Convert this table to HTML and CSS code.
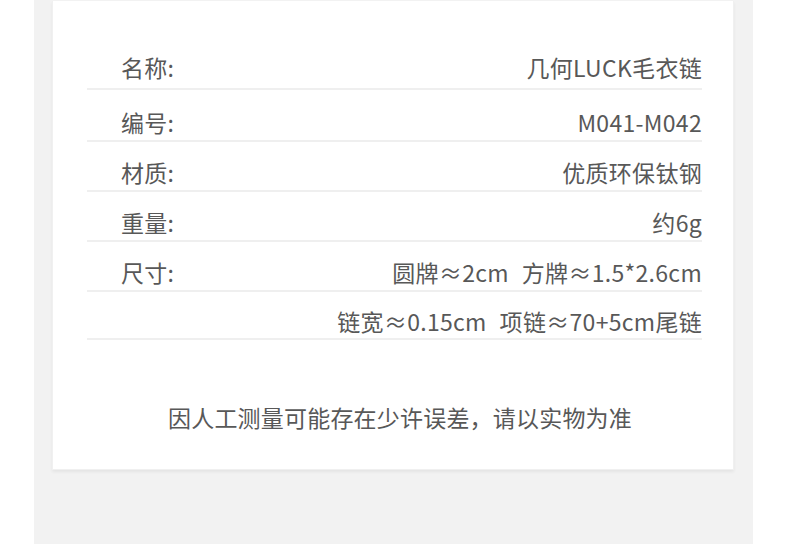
FILE: index.html
```html
<!DOCTYPE html>
<html lang="zh-CN">
<head>
    <meta charset="UTF-8">
    <meta name="viewport" content="width=device-width, initial-scale=1.0">
    <title>几何LUCK毛衣链 - 商品参数</title>
    <link rel="stylesheet" href="styles.css">
</head>
<body>
    <div class="page">
        <div class="card">
            <ul class="spec-list">
                <li class="spec-row">
                    <span class="spec-label">名称:</span>
                    <span class="spec-value">几何LUCK毛衣链</span>
                </li>
                <li class="spec-row">
                    <span class="spec-label">编号:</span>
                    <span class="spec-value">M041-M042</span>
                </li>
                <li class="spec-row">
                    <span class="spec-label">材质:</span>
                    <span class="spec-value">优质环保钛钢</span>
                </li>
                <li class="spec-row">
                    <span class="spec-label">重量:</span>
                    <span class="spec-value">约6g</span>
                </li>
                <li class="spec-row">
                    <span class="spec-label">尺寸:</span>
                    <span class="spec-value">圆牌≈2cm  方牌≈1.5*2.6cm</span>
                </li>
                <li class="spec-row">
                    <span class="spec-label"></span>
                    <span class="spec-value">链宽≈0.15cm  项链≈70+5cm尾链</span>
                </li>
            </ul>
            <p class="note">因人工测量可能存在少许误差，请以实物为准</p>
        </div>
    </div>
</body>
</html>
```

FILE: styles.css
```css
/* Global Styles */
* {
    margin: 0;
    padding: 0;
    box-sizing: border-box;
}

body {
    background: #ffffff;
    font-family: "Noto Sans CJK SC", "Noto Sans", sans-serif;
    color: #585858;
}

/* Gray column */
.page {
    margin-left: 34px;
    width: 719px;
    min-height: 544px;
    background: #f2f2f2;
    padding-top: 1px;
}

/* White card */
.card {
    margin: 0 19px 0 18px;
    background: #ffffff;
    border: 1px solid #f0f0f0;
    border-top: none;
    box-shadow: 0 2px 3px rgba(0, 0, 0, 0.06);
    padding: 39px 31px 37px 34px;
}

/* Spec rows */
.spec-list {
    list-style: none;
}

.spec-row {
    display: flex;
    justify-content: space-between;
    align-items: center;
    height: 50px;
    padding: 17px 0 5px 34px;
    border-bottom: 2px solid #efefef;
    font-size: 23px;
    line-height: 26px;
    letter-spacing: 0.3px;
}

.spec-row:first-child {
    padding-top: 14px;
    padding-bottom: 8px;
}

.spec-row:nth-child(2) {
    height: 52px;
    padding-top: 19px;
}

.spec-row:last-child {
    height: 48px;
    padding-top: 16px;
    padding-bottom: 4px;
}

.spec-value {
    white-space: pre;
    word-spacing: 1px;
}

/* Footer note */
.note {
    margin-top: 62px;
    padding-left: 11px;
    text-align: center;
    font-size: 23px;
    line-height: 30px;
    letter-spacing: 0.2px;
}
```
